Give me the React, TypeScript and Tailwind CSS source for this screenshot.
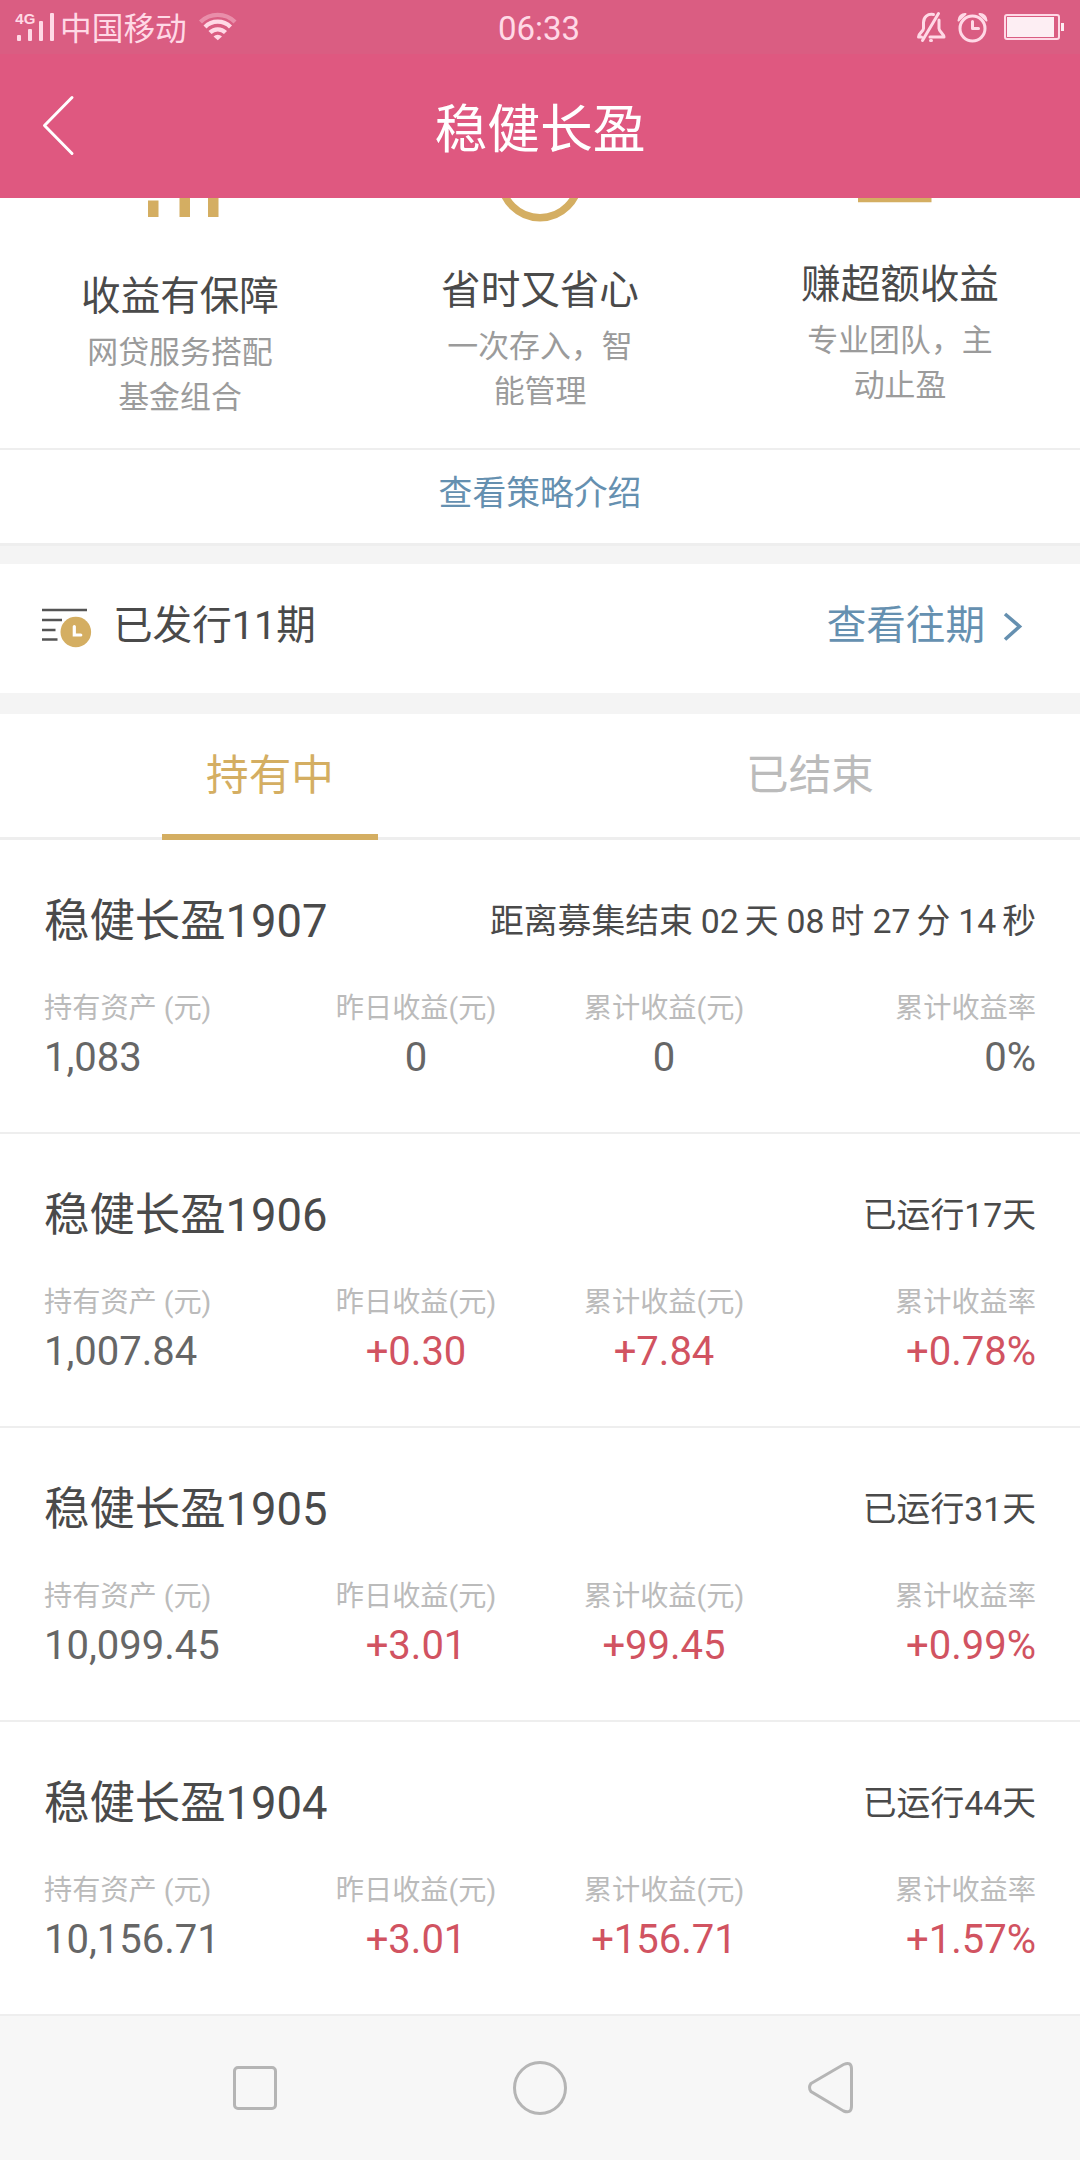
import type { ReactNode } from "react";

const features = [
  {
    title: "收益有保障",
    lines: ["网贷服务搭配", "基金组合"],
    space: "pt-[74px]",
    icon: (
      <svg width="120" height="24" viewBox="120 198 120 24" fill="#d4ae62">
        <path d="M148 200.500h10.500V217h-10.500zM179.500 198H190v19h-10.500zM208 198h10.500v19H208z" />
      </svg>
    ),
  },
  {
    title: "省时又省心",
    lines: ["一次存入，智", "能管理"],
    space: "pt-[68px]",
    icon: (
      <svg width="120" height="24" viewBox="480 198 120 24" fill="none" stroke="#d4ae62" strokeWidth="7.5">
        <circle cx="540" cy="179" r="38.8" />
      </svg>
    ),
  },
  {
    title: "赚超额收益",
    lines: ["专业团队，主", "动止盈"],
    space: "pt-[62px]",
    icon: (
      <svg width="120" height="24" viewBox="840 198 120 24" fill="#d4ae62">
        <path d="M858 198h73.500v4.300H858z" />
      </svg>
    ),
  },
];

function Count({ children }: { children: ReactNode }) {
  return <span className="ml-[8px] mr-[6px]">{children}</span>;
}

const holdings: { name: string; status: ReactNode; values: string[] }[] = [
  {
    name: "稳健长盈1907",
    status: (
      <>
        距离募集结束<Count>02</Count>天<Count>08</Count>时<Count>27</Count>分<Count>14</Count>秒
      </>
    ),
    values: ["1,083", "0", "0", "0%"],
  },
  { name: "稳健长盈1906", status: "已运行17天", values: ["1,007.84", "+0.30", "+7.84", "+0.78%"] },
  { name: "稳健长盈1905", status: "已运行31天", values: ["10,099.45", "+3.01", "+99.45", "+0.99%"] },
  { name: "稳健长盈1904", status: "已运行44天", values: ["10,156.71", "+3.01", "+156.71", "+1.57%"] },
];

const labels = ["持有资产 (元)", "昨日收益(元)", "累计收益(元)", "累计收益率"];
const aligns = ["text-left", "text-center", "text-center", "text-right"];

function StatusBar() {
  return (
    <div className="grid h-[54px] grid-cols-3 items-center bg-[#da5d82] pl-[14px] pr-[14px] text-[#ffd9e6]">
      <div className="flex items-center">
        <svg width="42" height="32" viewBox="14 11 42 32" fill="currentColor">
          <text x="15.300" y="24" fontSize="15" fontWeight="700" fontFamily="'Liberation Sans', sans-serif">4G</text>
          <rect x="17" y="35" width="4" height="6" rx="1" />
          <rect x="28" y="29" width="4" height="12" rx="1" />
          <rect x="39" y="21" width="4" height="20" rx="1" />
          <rect x="50" y="13" width="4" height="28" rx="1" />
        </svg>
        <span className="ml-[4px] mt-[6px] text-[31.700px] leading-[40px]">中国移动</span>
        <svg className="ml-[11px]" width="40" height="30" viewBox="198 12 40 30" fill="none" stroke="currentColor" strokeWidth="4.300">
          <path d="M200.500 22a24.500 24.500 0 0 1 34.500 0" opacity=".4" />
          <path d="M205 27a18 18 0 0 1 25.500 0" />
          <path d="M210 32.500a11 11 0 0 1 15.500 0" />
          <path d="M213.500 36.500a6 6 0 0 1 8.500 0l-4.200 3.700z" fill="currentColor" stroke="none" />
        </svg>
      </div>
      <div className="mt-[3px] pr-[2px] text-center text-[33px] leading-[40px]">06:33</div>
      <div className="flex items-center justify-end">
        <svg width="150" height="32" viewBox="916 11 150 32" fill="none" stroke="currentColor" strokeWidth="3" strokeLinecap="round" strokeLinejoin="round">
          <path d="M933.500 14.500c-6 -1 -10 2.500 -10 8v6c0 3 -5 4.500 -5 8.500h3M939 20v8.500c0 3 5 5.500 5 8.500h-14M938.500 13.500 922.500 40.500M930.500 40.500h1" />
          <circle cx="972.500" cy="28.500" r="12.500" />
          <path d="M972.500 21.500v7h6" />
          <path d="M958.500 20.500a6.500 6.500 0 0 1 7-6.500zM986.500 20.500a6.500 6.500 0 0 0-7-6.500z" fill="currentColor" strokeWidth="2" />
          <rect x="1005" y="15" width="54" height="24" rx="2" strokeWidth="2" />
          <path d="M1007 17h47v20h-47zM1061 23h3v8h-3z" fill="#fdeef3" stroke="none" />
        </svg>
      </div>
    </div>
  );
}

function Holding({ name, status, values }: (typeof holdings)[number]) {
  return (
    <section className="h-[294px] border-b-2 border-[#eeeeee] px-[44px] pt-[50px]">
      <div className="flex h-[62px] items-center justify-between text-[#4a4a4a]">
        <h2 className="text-[45.400px] leading-[61px]">{name}</h2>
        <div className="mt-[2px] text-[33.800px] leading-[62px]">{status}</div>
      </div>
      <div className="mt-[37px] grid grid-cols-4">
        {values.map((value, i) => (
          <div key={i} className={aligns[i]}>
            <div className="text-[28.200px] leading-[40px] text-[#bbbbbb]">{labels[i]}</div>
            <div className={`mt-[4px] text-[40px] leading-[50px] ${value.startsWith("+") ? "text-[#d15361]" : "text-[#666666]"}`}>
              {value}
            </div>
          </div>
        ))}
      </div>
    </section>
  );
}

export default function App() {
  return (
    <div className="h-[2160px] w-[1080px] overflow-hidden bg-white font-['Roboto','Noto_Sans_CJK_SC',sans-serif]" lang="zh-CN">
      <StatusBar />
      <header className="grid h-[144px] grid-cols-[1fr_auto_1fr] items-center bg-[#df5880] text-white">
        <svg className="ml-[40px]" width="40" height="64" viewBox="40 94 40 64" fill="none" stroke="white" strokeWidth="3" strokeLinecap="round" strokeLinejoin="round">
          <path d="M72 97.500 44.500 125.500 72 153.500" />
        </svg>
        <h1 className="mt-[8px] text-[52.800px] leading-[70px]">稳健长盈</h1>
      </header>

      <div className="grid h-[252px] grid-cols-3 border-b-2 border-[#eeeeee]">
        {features.map((f) => (
          <div key={f.title} className="flex flex-col items-center text-center">
            <div className="h-0">{f.icon}</div>
            <div className={f.space}>
              <h3 className="text-[39.600px] leading-[50px] text-[#4a4a4a]">{f.title}</h3>
              <p className="mt-[8px] text-[30.900px] leading-[45px] text-[#9b9b9b]">
                {f.lines[0]}
                <br />
                {f.lines[1]}
              </p>
            </div>
          </div>
        ))}
      </div>
      <div className="h-[96px] border-b-[3px] border-[#eeeeee] text-center text-[33.800px] leading-[87px] text-[#6590b0]">查看策略介绍</div>
      <div className="h-[18px] bg-[#f4f4f4]" />

      <div className="flex h-[129px] items-center pb-[5px] pl-[40px] pr-[54px]">
        <svg width="54" height="44" viewBox="40 604 54 44" fill="none">
          <path d="M42 610h45M42 620h20M42 630h13.500M42 639.500h15.500" stroke="#555" strokeWidth="2.600" />
          <circle cx="75.800" cy="632" r="15.300" fill="#d4ae62" />
          <path d="M74.300 626.500v8.500h6.500" stroke="white" strokeWidth="3.200" strokeLinecap="round" />
        </svg>
        <span className="ml-[19px] text-[39.600px] leading-[124px] text-[#4a4a4a]">已发行11期</span>
        <span className="ml-auto text-[39.600px] leading-[124px] text-[#6590b0]">查看往期</span>
        <svg className="ml-[15px]" width="26" height="36" viewBox="1000 609.500 26 36" fill="none" stroke="#6590b0" strokeWidth="3.600">
          <path d="M1005 615.500 1019.500 628 1005 641" />
        </svg>
      </div>
      <div className="h-[21px] bg-[#f4f4f4]" />

      <div className="grid h-[126px] grid-cols-2 border-b-[3px] border-[#eeeeee] text-center text-[42.600px] leading-[123px]">
        <div className="flex h-[126px] flex-col items-center text-[#d4ae62]">
          <span className="h-[120px]">持有中</span>
          <span className="h-[6px] w-[216px] bg-[#d4ae62]" />
        </div>
        <div className="text-[#bbbbbb]">已结束</div>
      </div>

      {holdings.map((h) => (
        <Holding key={h.name} {...h} />
      ))}

      <nav className="flex h-[144px] items-center justify-between bg-[#f7f7f7] px-[225px]">
        <svg width="60" height="60" viewBox="225 2058 60 60" fill="none" stroke="#b5b5b5" strokeWidth="3">
          <rect x="234.500" y="2067.500" width="41" height="41" rx="3.500" />
        </svg>
        <svg width="60" height="60" viewBox="510 2058 60 60" fill="none" stroke="#b5b5b5" strokeWidth="3">
          <circle cx="540" cy="2088" r="25.500" />
        </svg>
        <svg width="60" height="60" viewBox="795 2058 60 60" fill="none" stroke="#b5b5b5" strokeWidth="3">
          <path d="M811 2083.500 843.500 2064.500Q851.500 2061 851.500 2069V2106Q851.500 2114 843.500 2111L811 2091.500Q808 2087.500 811 2083.500Z" />
        </svg>
      </nav>
    </div>
  );
}
